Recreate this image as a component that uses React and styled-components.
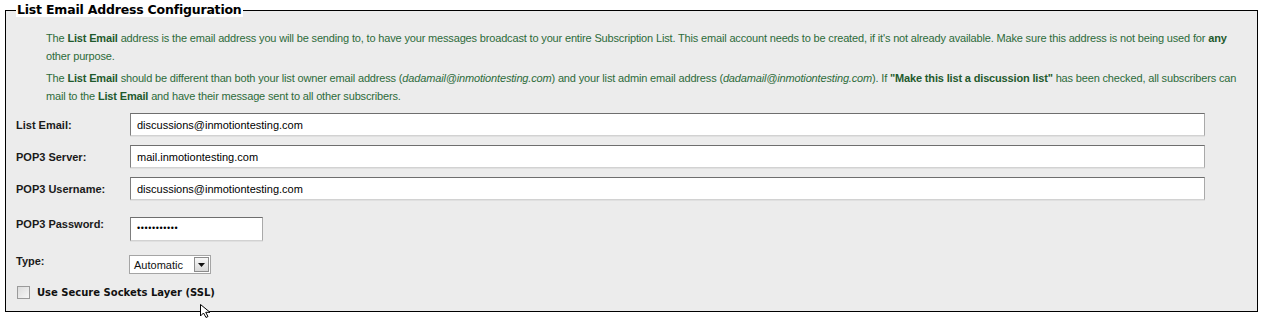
import React from 'react'
import styled, { createGlobalStyle } from 'styled-components'

const Global = createGlobalStyle`
  html, body {
    margin: 0;
    padding: 0;
    background: #ffffff;
  }
  body {
    font-family: "Liberation Sans", Arial, sans-serif;
  }
`

const Page = styled.div`
  position: relative;
  width: 1264px;
  height: 318px;
  padding: 3px 0 0 5px;
  box-sizing: border-box;
`

const Fieldset = styled.fieldset`
  margin: 0;
  width: 1253px;
  height: 309px;
  box-sizing: border-box;
  border: 1px solid #000;
  background: #ececec;
  padding: 0 10px 0 10px;
`

const Legend = styled.legend`
  padding: 0 1px;
  margin-left: 0;
  font-family: "DejaVu Sans", Verdana, sans-serif;
  font-weight: bold;
  font-size: 12.5px;
  letter-spacing: -0.2px;
  color: #000;
  background: #fff;
  line-height: 14px;
`

const Intro = styled.div`
  padding: 13px 6px 0 30px;
  color: #2c6b3a;
  font-size: 11px;
  letter-spacing: -0.16px;
  line-height: 17.5px;
`

const Para = styled.p`
  margin: 0 0 ${p => p.mb || 0}px 0;

  b {
    font-weight: bold;
    color: #1f5a2c;
  }
  i {
    font-style: italic;
  }
`

const Form = styled.div`
  display: flex;
  flex-direction: column;
  padding: 8px 0 0 0;
`

const Row = styled.div`
  display: flex;
  align-items: ${p => (p.top ? 'flex-start' : 'center')};
  height: ${p => p.h}px;
  margin-top: ${p => p.mt || 0}px;
`

const Label = styled.div`
  width: 114px;
  flex: none;
  font-size: 11px;
  font-weight: bold;
  color: #1a1a1a;
  padding-top: ${p => p.pt || 0}px;
`

const TextBox = styled.div`
  box-sizing: border-box;
  width: ${p => p.w}px;
  height: ${p => p.h || 23}px;
  background: #fff;
  border-style: solid;
  border-width: 1px;
  border-color: #6e6e6e #a9a9a9 #d2d2d2 #7d7d7d;
  box-shadow: 0 1px 0 #e0e0e0;
  display: flex;
  align-items: center;
  padding-left: 6px;
  font-size: 11px;
  color: #000;
`

const Dots = styled.span`
  font-size: 9px;
  letter-spacing: 0.6px;
  line-height: 1;
  padding-bottom: 1px;
`

const Select = styled.div`
  box-sizing: border-box;
  margin-left: -1px;
  width: 82px;
  height: 19px;
  background: #fff;
  border: 1px solid #a5a5a5;
  display: flex;
  align-items: center;
  justify-content: space-between;
  padding: 0 1px 0 4px;
  font-size: 11px;
  color: #111;
`

const SelectButton = styled.div`
  width: 15px;
  height: 15px;
  box-sizing: border-box;
  border: 1px solid #8c8c8c;
  background: linear-gradient(#f7f7f7, #d9d9d9);
  display: flex;
  align-items: center;
  justify-content: center;
`

const Check = styled.div`
  display: flex;
  align-items: center;
  gap: 7px;
  margin-left: 1px;
`

const Box = styled.div`
  width: 13px;
  height: 13px;
  box-sizing: border-box;
  border: 1px solid #9a9a9a;
  background: linear-gradient(135deg, #dcdcdc, #f6f6f6);
`

const CheckLabel = styled.span`
  font-family: "DejaVu Sans", Verdana, sans-serif;
  font-size: 10px;
  font-weight: bold;
  color: #111;
`

const Cursor = styled.svg`
  position: absolute;
  left: 200px;
  top: 304px;
`

export default function App() {
  return (
    <Page>
      <Global />
      <Fieldset>
        <Legend>List Email Address Configuration</Legend>
        <Intro>
          <Para mb={5}>
            The <b>List Email</b> address is the email address you will be sending to, to have your messages
            broadcast to your entire Subscription List. This email account needs to be created, if it's not already
            available. Make sure this address is not being used for <b>any</b> other purpose.
          </Para>
          <Para>
            The <b>List Email</b> should be different than both your list owner email address (
            <i>dadamail@inmotiontesting.com</i>) and your list admin email address (
            <i>dadamail@inmotiontesting.com</i>). If <b>"Make this list a discussion list"</b> has been checked, all
            subscribers can mail to the <b>List Email</b> and have their message sent to all other subscribers.
          </Para>
        </Intro>
        <Form>
          <Row h={23}>
            <Label>List Email:</Label>
            <TextBox w={1075}>discussions@inmotiontesting.com</TextBox>
          </Row>
          <Row h={23} mt={9}>
            <Label>POP3 Server:</Label>
            <TextBox w={1075}>mail.inmotiontesting.com</TextBox>
          </Row>
          <Row h={23} mt={9}>
            <Label>POP3 Username:</Label>
            <TextBox w={1075}>discussions@inmotiontesting.com</TextBox>
          </Row>
          <Row h={24} mt={17} top>
            <Label pt={1}>POP3 Password:</Label>
            <TextBox w={133} h={24}>
              <Dots>•••••••••••</Dots>
            </TextBox>
          </Row>
          <Row h={19} mt={14} top>
            <Label>Type:</Label>
            <Select>
              Automatic
              <SelectButton>
                <svg width="7" height="4" viewBox="0 0 7 4">
                  <path d="M0 0 H7 L3.5 4 Z" fill="#111" />
                </svg>
              </SelectButton>
            </Select>
          </Row>
          <Row h={14} mt={11}>
            <Check>
              <Box />
              <CheckLabel>Use Secure Sockets Layer (SSL)</CheckLabel>
            </Check>
          </Row>
        </Form>
      </Fieldset>
      <Cursor width="12" height="14" viewBox="0 0 12 14">
        <path d="M0.5 0.5 V12 L3.5 9 L6 13.5 L8 12.5 L5.7 8.3 H10 Z" fill="#fff" stroke="#000" strokeWidth="1" />
      </Cursor>
    </Page>
  )
}
